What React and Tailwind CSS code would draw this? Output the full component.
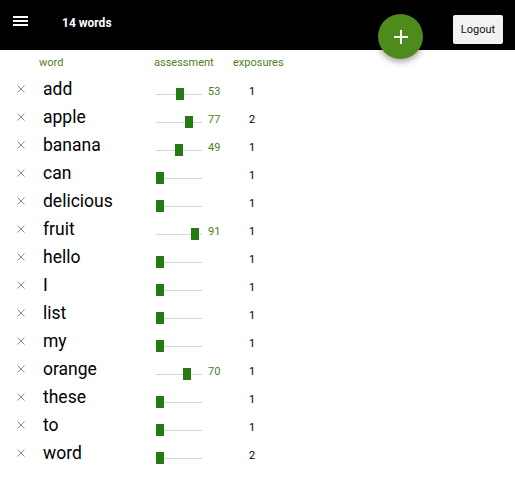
import React from "react";

const words = [
  { word: "add", score: 53, exposures: 1 },
  { word: "apple", score: 77, exposures: 2 },
  { word: "banana", score: 49, exposures: 1 },
  { word: "can", score: 0, exposures: 1 },
  { word: "delicious", score: 0, exposures: 1 },
  { word: "fruit", score: 91, exposures: 1 },
  { word: "hello", score: 0, exposures: 1 },
  { word: "I", score: 0, exposures: 1 },
  { word: "list", score: 0, exposures: 1 },
  { word: "my", score: 0, exposures: 1 },
  { word: "orange", score: 70, exposures: 1 },
  { word: "these", score: 0, exposures: 1 },
  { word: "to", score: 0, exposures: 1 },
  { word: "word", score: 0, exposures: 2 },
];

function Slider({ value }) {
  return (
    <div className="relative w-[46px] h-3">
      <div className="absolute left-0 right-0 top-[6px] h-px bg-[#d6d6d6]" />
      <div
        className="absolute top-0 w-2 h-3 bg-[#267a14]"
        style={{ left: Math.round(value * 0.38) }}
      />
    </div>
  );
}

export default function App() {
  return (
    <div className="relative min-h-[500px] bg-white font-['Roboto',sans-serif]">
      {/* barra superior */}
      <header className="h-[50px] bg-black flex items-start">
        <button className="ml-[13px] mt-[16px] flex flex-col gap-[2px]">
          <span className="block w-[15px] h-[2px] bg-white" />
          <span className="block w-[15px] h-[2px] bg-white" />
          <span className="block w-[15px] h-[2px] bg-white" />
        </button>
        <span className="ml-[34px] mt-[14px] text-[12px] font-bold text-white">14 words</span>
        <button className="ml-auto mr-3 mt-[15px] w-[50px] h-[29px] pt-px bg-[#f2f2f2] rounded-[2px] text-[11px] font-normal text-[#111] shadow-[0_1px_2px_rgba(0,0,0,0.2)]">
          Logout
        </button>
      </header>

      {/* botón flotante */}
      <button className="absolute left-[378px] top-[14px] w-[45px] h-[45px] rounded-full bg-[#4f8a1c] text-white flex items-center justify-center shadow-[0_3px_6px_rgba(0,0,0,0.35)]">
        <svg width="14" height="14" viewBox="0 0 14 14">
          <path d="M7 0v14M0 7h14" stroke="white" strokeWidth="2" />
        </svg>
      </button>

      {/* encabezados */}
      <div className="h-[26px] flex items-center text-[11px] text-[#4e7e24]">
        <span className="ml-[39px] w-[115px]">word</span>
        <span className="w-[79px]">assessment</span>
        <span>exposures</span>
      </div>

      {words.map((w) => (
        <div key={w.word} className="h-[28px] flex items-center">
          <span className="ml-[17px] w-[26px] mb-[3px] flex">
            <svg width="8" height="8" viewBox="0 0 8 8">
              <path d="M0.5 0.5l7 7M7.5 0.5l-7 7" stroke="#8a8a8a" strokeWidth="1" />
            </svg>
          </span>
          <span className="w-[113px] text-[17.5px] text-black leading-none mb-[1px]">{w.word}</span>
          <div className="mt-[8px]">
            <Slider value={w.score} />
          </div>
          <span className="ml-[6px] w-[41px] text-[11px] text-[#4e7e24] mt-[4px]">
            {w.score > 0 ? w.score : ""}
          </span>
          <span className="text-[11px] text-black mt-[4px]">{w.exposures}</span>
        </div>
      ))}
    </div>
  );
}
